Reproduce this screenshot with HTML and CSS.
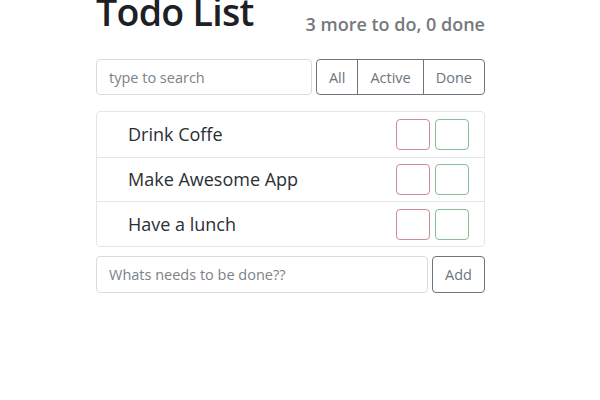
FILE: index.html
```html
<!DOCTYPE html>
<html lang="en">
<head>
  <meta charset="UTF-8">
  <meta name="viewport" content="width=device-width, initial-scale=1.0">
  <title>Todo List</title>
  <link rel="stylesheet" href="styles.css">
</head>
<body>

  <div class="todo-app">
    <header class="app-header">
      <h1>Todo List</h1>
      <h2>3 more to do, 0 done</h2>
    </header>

    <div class="top-panel">
      <input type="text" class="form-control search" placeholder="type to search">
      <div class="btn-group">
        <button class="btn btn-outline">All</button>
        <button class="btn btn-outline">Active</button>
        <button class="btn btn-outline">Done</button>
      </div>
    </div>

    <ul class="todo-list">
      <li class="list-item">
        <span class="label">Drink Coffe</span>
        <button class="btn btn-sm btn-danger"></button>
        <button class="btn btn-sm btn-success"></button>
      </li>
      <li class="list-item">
        <span class="label">Make Awesome App</span>
        <button class="btn btn-sm btn-danger"></button>
        <button class="btn btn-sm btn-success"></button>
      </li>
      <li class="list-item">
        <span class="label">Have a lunch</span>
        <button class="btn btn-sm btn-danger"></button>
        <button class="btn btn-sm btn-success"></button>
      </li>
    </ul>

    <form class="add-form">
      <input type="text" class="form-control" placeholder="Whats needs to be done??">
      <button class="btn btn-outline">Add</button>
    </form>
  </div>

</body>
</html>
```

FILE: styles.css
```css
* {
  margin: 0;
  padding: 0;
  box-sizing: border-box;
  font-family: "Open Sans", "Noto Sans", sans-serif;
}

body {
  background: #fff;
  color: #212529;
}

.todo-app {
  width: 389px;
  margin: 0 auto 0 96px;
  margin-top: -12px;
}

.app-header {
  display: flex;
  justify-content: space-between;
  align-items: flex-end;
}

.app-header h1 {
  font-size: 37.5px;
  font-weight: 600;
  line-height: 48px;
  letter-spacing: -0.7px;
  color: #1d2024;
}

.app-header h2 {
  font-size: 18px;
  font-weight: 600;
  color: #74797e;
  line-height: 20px;
  margin-bottom: 2px;
}

.top-panel {
  display: flex;
  gap: 4px;
  margin-top: 23px;
}

.form-control {
  height: 36px;
  border: 1px solid #d8dcdf;
  border-radius: 4px;
  padding: 0 12px;
  font-size: 14.5px;
  color: #495057;
  outline: none;
}

.form-control::placeholder {
  color: #7b8288;
}

.search {
  flex: 1;
}

.btn {
  background: #fff;
  border: 1px solid #6c757d;
  border-radius: 4px;
  color: #6c757d;
  font-size: 14.5px;
  cursor: pointer;
}

.btn-group {
  display: flex;
}

.btn-group .btn {
  height: 36px;
  padding: 0 12px;
  border-radius: 0;
}

.btn-group .btn + .btn {
  margin-left: -1px;
}

.btn-group .btn:first-child {
  border-radius: 4px 0 0 4px;
}

.btn-group .btn:last-child {
  border-radius: 0 4px 4px 0;
}

.todo-list {
  list-style: none;
  margin-top: 16px;
  border: 1px solid #e3e6e8;
  border-radius: 4px;
}

.list-item {
  display: flex;
  align-items: center;
  gap: 5px;
  height: 44.67px;
  padding: 0 15px 0 31px;
}

.list-item + .list-item {
  border-top: 1px solid #e3e6e8;
}

.label {
  flex: 1;
  font-size: 18px;
  color: #2b2f33;
}

.btn-sm {
  width: 34px;
  height: 31px;
}

.btn-danger {
  border-color: #cf8a93;
}

.btn-success {
  border-color: #86bf95;
}

.add-form {
  display: flex;
  gap: 4px;
  margin-top: 9px;
}

.add-form .form-control {
  flex: 1;
  height: 37px;
}

.add-form .btn {
  width: 53px;
  height: 37px;
}
```
